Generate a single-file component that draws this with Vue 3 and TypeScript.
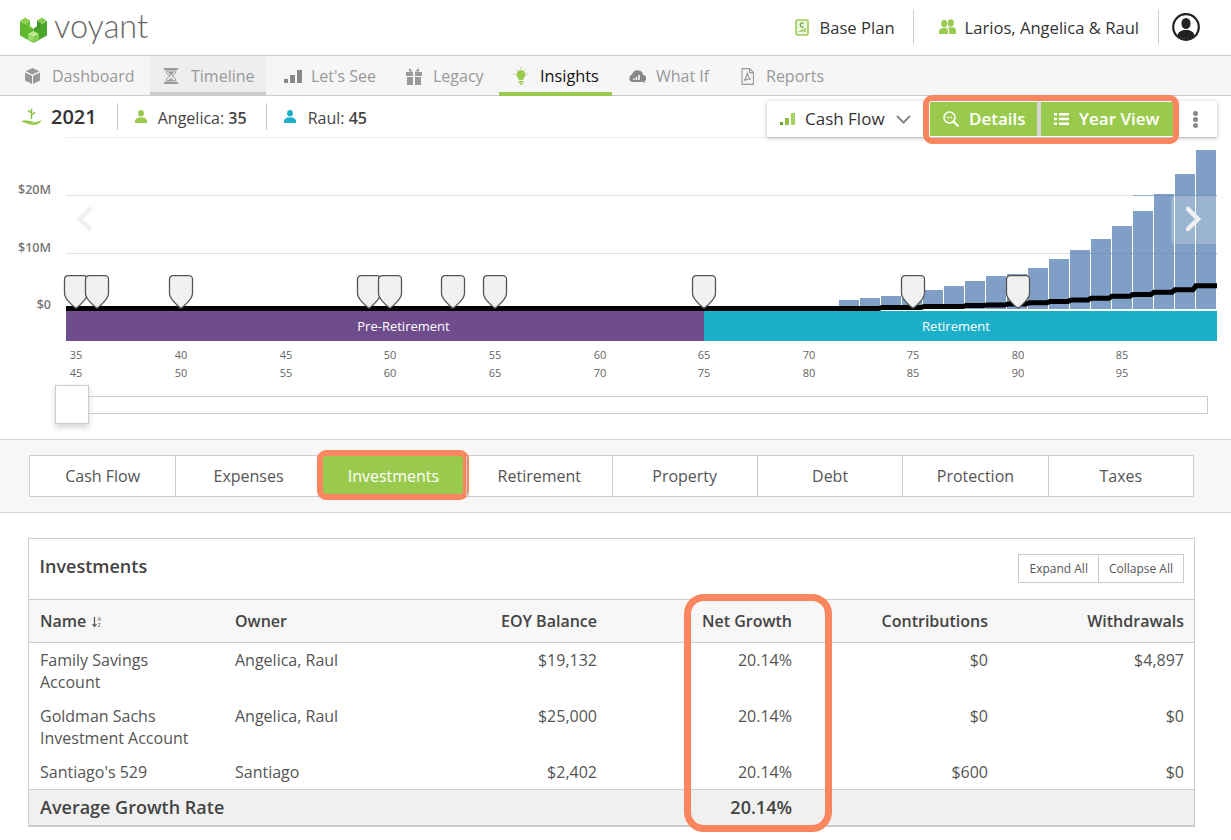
<script setup lang="ts">
const navItems = [
  { key: 'cube', label: 'Dashboard', w: 140, pad: 15 },
  { key: 'glass', label: 'Timeline', w: 116, pad: 14 },
  { key: 'bars', label: "Let's See", w: 125, pad: 18 },
  { key: 'gift', label: 'Legacy', w: 108, pad: 15 },
  { key: 'bulb', label: 'Insights', w: 113, pad: 14 },
  { key: 'cloud', label: 'What If', w: 114, pad: 17 },
  { key: 'pdf', label: 'Reports', w: 114, pad: 13 },
]

const barTops: [number, number][] = [
  [839, 300], [860, 298], [881, 296], [902, 293], [923, 290], [944, 286],
  [965, 281], [986, 276], [1007, 274], [1028, 268], [1049, 259], [1070, 250],
  [1091, 239], [1112, 226], [1133, 211], [1154, 194], [1175, 174], [1196, 150],
]

// black line: one flat run per year, with a short jump between them
const steps: [number, number][] = [
  [840, 308.5], [882, 307.5], [924, 306.5], [966, 305.5], [987, 305], [1008, 304],
  [1029, 302.8], [1050, 301.5], [1071, 300], [1091, 298.3], [1112, 296.2],
  [1133, 294.4], [1154, 292.2], [1175, 289.8], [1196, 285.8],
]
const linePoints = [
  '66,308.5',
  ...steps.map(([x, y], i) => {
    const end = i + 1 < steps.length ? steps[i + 1][0] - 3 : 1217
    return `${x},${y} ${end},${y}`
  }),
].join(' ')

const markers = [76, 97, 181, 369, 390, 453, 495, 704, 913, 1018]

const ages = [
  [76, 35, 45], [181, 40, 50], [286, 45, 55], [390, 50, 60], [495, 55, 65], [600, 60, 70],
  [704, 65, 75], [809, 70, 80], [913, 75, 85], [1018, 80, 90], [1122, 85, 95],
]

const sections = ['Cash Flow', 'Expenses', 'Investments', 'Retirement', 'Property', 'Debt', 'Protection', 'Taxes']

const rows = [
  { name: 'Family Savings Account', owner: 'Angelica, Raul', balance: '$19,132', growth: '20.14%', contrib: '$0', withdraw: '$4,897' },
  { name: 'Goldman Sachs Investment Account', owner: 'Angelica, Raul', balance: '$25,000', growth: '20.14%', contrib: '$0', withdraw: '$0' },
  { name: "Santiago's 529", owner: 'Santiago', balance: '$2,402', growth: '20.14%', contrib: '$600', withdraw: '$0' },
]
</script>

<template>
  <div class="page">
    <header class="topbar">
      <div class="logo">
        <svg width="27" height="27" viewBox="0 0 27 27">
          <polygon points="0,5 13.5,13 13.5,27 0,19.5" fill="#5fb82e" />
          <polygon points="27,5 13.5,13 13.5,27 27,19.5" fill="#4aa52b" />
          <polygon points="0,5 5,1.5 10,4.5 5,8" fill="#8fd14f" />
          <polygon points="17,4.5 22,1.5 27,5 22,8" fill="#86cc4a" />
          <polygon points="5,8 10,4.5 10,10 13.5,13 8,13" fill="#6cc137" />
          <polygon points="22,8 17,4.5 17,10 13.5,13 19,13" fill="#3f9a2a" />
          <polygon points="8,18 13.5,15 19,18 13.5,21" fill="#bce88f" />
          <polygon points="8,18 13.5,21 13.5,26.5 8,23.5" fill="#9bd968" />
          <polygon points="19,18 13.5,21 13.5,26.5 19,23.5" fill="#84cb52" />
        </svg>
        <span class="logo-text">voyant</span>
      </div>
      <div class="top-right">
        <div class="top-item plan">
          <svg width="14" height="17" viewBox="0 0 14 17">
            <rect x="1" y="1" width="12" height="15" rx="1.5" fill="#eef7e2" stroke="#9aca4d" stroke-width="1.5" />
            <path d="M8.5 4.500a2 2 0 1 0 0 3" fill="none" stroke="#6aa332" stroke-width="1.2" />
            <path d="M4 13v-1M6 13v-2M8 13v-3M10 13v-4" stroke="#8bbf45" stroke-width="1.2" />
          </svg>
          <span>Base Plan</span>
        </div>
        <div class="top-item client">
          <svg width="17" height="16" viewBox="0 0 17 16" fill="#9aca4d">
            <ellipse cx="5.2" cy="4.6" rx="3" ry="3.8" />
            <path d="M0 15v-2.500c0-2.500 2.500-3 3.500-3.500h3.400c1 .5 2 1 2 3.500v2.500z" />
            <ellipse cx="11.800" cy="4" rx="3.100" ry="3.800" />
            <path d="M8 8.500h7c1 .5 2 1 2 3.500v3h-6.800v-3c0-1.800-1-3-2.200-3.500z" />
          </svg>
          <span>Larios, Angelica &amp; Raul</span>
        </div>
        <svg class="avatar" width="28" height="28" viewBox="0 0 28 28">
          <circle cx="14" cy="14" r="12.800" fill="#fff" stroke="#222" stroke-width="2.200" />
          <ellipse cx="14" cy="10.500" rx="4.600" ry="5.600" fill="#222" />
          <path d="M5.500 22.500c.6-3.600 3.600-4.400 6-5.400h5c2.400 1 5.400 1.800 6 5.400a12 12 0 0 1-17 0z" fill="#222" />
        </svg>
      </div>
    </header>

    <nav class="nav">
      <div
        v-for="item in navItems"
        :key="item.key"
        class="nav-item"
        :class="{ visited: item.key === 'glass', current: item.key === 'bulb' }"
        :style="{ width: item.w + 'px', paddingLeft: item.pad + 'px' }"
      >
        <span class="nav-icon">
          <svg v-if="item.key === 'cube'" width="15" height="16" viewBox="0 0 15 16" fill="#999">
            <polygon points="7.500,0 14.500,3.300 7.500,6.500 .5,3.300" />
            <polygon points="0,4.500 7,7.700 7,16 0,12.500" />
            <polygon points="15,4.500 8,7.700 8,16 15,12.500" />
          </svg>
          <svg v-else-if="item.key === 'glass'" width="14" height="16" viewBox="0 0 14 16" fill="#999">
            <rect x="0" y="0" width="14" height="2" />
            <rect x="0" y="14" width="14" height="2" />
            <path d="M2 3h10c0 3-3 4-4 5 1 1 4 2 4 5H2c0-3 3-4 4-5-1-1-4-2-4-5z" fill="none" stroke="#999" />
            <path d="M4 4h6l-3 3.500zM3.500 13 7 10l3.500 3z" />
          </svg>
          <svg v-else-if="item.key === 'bars'" width="18" height="13" viewBox="0 0 18 13" fill="#888">
            <rect x="0" y="9" width="4" height="4" />
            <rect x="6" y="5" width="5" height="8" />
            <rect x="13" y="0" width="5" height="13" />
          </svg>
          <svg v-else-if="item.key === 'gift'" width="16" height="17" viewBox="0 0 16 17" fill="#999">
            <path d="M3 0l4 3.500h-4zM13 0L9 3.500h4z" />
            <rect x="0" y="4" width="7" height="4" />
            <rect x="9" y="4" width="7" height="4" />
            <rect x="1" y="9" width="6" height="8" />
            <rect x="9" y="9" width="6" height="8" />
          </svg>
          <svg v-else-if="item.key === 'bulb'" width="16" height="18" viewBox="0 0 16 18">
            <path d="M8 3a4.500 4.500 0 0 0-2.500 8.200V13h5v-1.800A4.500 4.500 0 0 0 8 3z" fill="#9aca4d" />
            <rect x="5.500" y="14" width="5" height="1.500" fill="#9aca4d" />
            <rect x="6.500" y="16" width="3" height="1.500" fill="#9aca4d" />
            <path d="M8 0v1.800M2.500 2l1.300 1.300M13.500 2l-1.300 1.300M.5 7h1.700M13.800 7h1.700" stroke="#b8b8a0" />
          </svg>
          <svg v-else-if="item.key === 'cloud'" width="17" height="15" viewBox="0 0 17 15">
            <path d="M4 13a3.800 3.800 0 0 1-1-7.400A5 5 0 0 1 9 1.500a5 5 0 0 1 5 4.200 3.600 3.600 0 0 1-1 7.300z" fill="#888" />
            <path d="M5 11V9.500M7.500 11V8M10 11V6" stroke="#fff" stroke-width="1.500" />
            <circle cx="15.500" cy="13.500" r=".7" fill="#888" />
          </svg>
          <svg v-else class="pdf-icon" width="13" height="17" viewBox="0 0 13 17" fill="none" stroke="#999" stroke-width="1.100">
            <path d="M1 .6h7.500L12.400 4.500v11.900H1z" />
            <path d="M8.500.6v4h3.900" />
            <path d="M6.200 5.500c-.6 2.500-1.300 5-3 7 2-1 4.500-1.500 6.500-1.300-1.500-1-2.800-3.300-3.500-5.700z" />
          </svg>
        </span>
        <span>{{ item.label }}</span>
      </div>
    </nav>

    <div class="subbar">
      <div class="sub-left">
        <div class="sub-year">
          <svg width="21" height="20" viewBox="0 0 21 20">
            <path d="M10.500 12V2" stroke="#8ebf48" stroke-width="1.500" fill="none" />
            <path d="M10.500 6C8.500 6 7 5 6.500 3c2 0 3.500 1 4 3zM10.500 8c2 0 3.500-1 4-3-2 0-3.500 1-4 3z" fill="#8ebf48" />
            <path d="M0 14.500c3-1.800 6-1.500 8-.5h4.500l-2.500 1.600 4.500-.6 6.500-1.500c-2.500 3-5.500 4.500-9 4.500-3 0-7.500-2.500-12-3.500z" fill="#9aca4d" />
          </svg>
          <span>2021</span>
        </div>
        <div class="sub-person first">
          <svg width="12" height="13" viewBox="0 0 12 13" fill="#9aca4d">
            <ellipse cx="6" cy="3.300" rx="2.900" ry="3.300" />
            <path d="M0 13v-2c0-2 2-3 3.500-3.500h5C10 8 12 9 12 11v2z" />
          </svg>
          <span>Angelica: <b>35</b></span>
        </div>
        <div class="sub-person second">
          <svg width="12" height="13" viewBox="0 0 12 13" fill="#1cafc9">
            <ellipse cx="6" cy="3.300" rx="2.900" ry="3.300" />
            <path d="M0 13v-2c0-2 2-3 3.500-3.500h5C10 8 12 9 12 11v2z" />
          </svg>
          <span>Raul: <b>45</b></span>
        </div>
      </div>

      <div class="controls">
        <div class="dropdown">
          <svg width="15" height="12" viewBox="0 0 15 12">
            <rect x="0" y="9" width="3" height="3" fill="#6aa332" />
            <rect x="5" y="5" width="4" height="7" fill="#8bbf45" />
            <rect x="11" y="0" width="4" height="12" fill="#a5d35f" />
          </svg>
          <span>Cash Flow</span>
          <svg class="chev" width="15" height="9" viewBox="0 0 15 9" fill="none" stroke="#888" stroke-width="2">
            <path d="M1 1l6.500 6.500L14 1" />
          </svg>
        </div>
        <div class="green-group">
          <button class="green-btn details">
            <svg width="16" height="16" viewBox="0 0 16 16" fill="none" stroke="#fff" stroke-width="1.500">
              <circle cx="6.500" cy="6.500" r="5.500" />
              <path d="M10.500 10.500 15.500 15.500" stroke-width="2" />
              <path d="M4 6.500h5" stroke-dasharray="1.200 .8" />
            </svg>
            <span>Details</span>
          </button>
          <button class="green-btn yearview">
            <svg width="15" height="12" viewBox="0 0 15 12" fill="#fff">
              <rect x="0" y="0" width="3" height="2.500" />
              <rect x="5" y="0" width="10" height="2.500" />
              <rect x="0" y="4.700" width="3" height="2.500" />
              <rect x="5" y="4.700" width="10" height="2.500" />
              <rect x="0" y="9.500" width="3" height="2.500" />
              <rect x="5" y="9.500" width="10" height="2.500" />
            </svg>
            <span>Year View</span>
          </button>
          <span class="ring ring-top"></span>
        </div>
        <div class="more">
          <i></i><i></i><i></i>
        </div>
      </div>
    </div>

    <svg class="chart" width="1231" height="248" viewBox="0 137 1231 248">
      <line x1="66" x2="1217" y1="137.500" y2="137.500" stroke="#eee" />
      <line x1="66" x2="1217" y1="195.500" y2="195.500" stroke="#e2e2e2" />
      <line x1="66" x2="1217" y1="253.500" y2="253.500" stroke="#e2e2e2" />
      <text class="axis" x="51" y="194" text-anchor="end">$20M</text>
      <text class="axis" x="51" y="252" text-anchor="end">$10M</text>
      <text class="axis" x="51" y="309" text-anchor="end">$0</text>

      <rect v-for="b in barTops" :key="b[0]" :x="b[0]" :y="b[1]" width="20" :height="309 - b[1]" fill="#7f9fc6" />
      <line x1="1133" x2="1217" y1="195.500" y2="195.500" stroke="#6f8fb6" opacity=".6" />
      <line x1="1070" x2="1217" y1="253.500" y2="253.500" stroke="#6f8fb6" opacity=".6" />

      <polyline :points="linePoints" fill="none" stroke="#000" stroke-width="5" />

      <g v-for="m in markers" :key="m" :transform="`translate(${m} 275)`">
        <path
          d="M-8 .7h16a3.500 3.500 0 0 1 3.500 3.500v14c0 5-7 12-11.500 15-4.500-3-11.500-10-11.500-15v-14a3.500 3.500 0 0 1 3.500-3.500z"
          fill="#f1f1f1"
          stroke="#555"
          stroke-width="1.300"
        />
      </g>

      <rect x="66" y="311" width="638" height="30" fill="#6f4c8b" />
      <rect x="704" y="311" width="513" height="30" fill="#1cafc9" />
      <text class="band" x="403.500" y="330.500" text-anchor="middle">Pre-Retirement</text>
      <text class="band" x="956" y="330.500" text-anchor="middle">Retirement</text>

      <g v-for="a in ages" :key="a[0]">
        <text class="age" :x="a[0]" y="359" text-anchor="middle">{{ a[1] }}</text>
        <text class="age" :x="a[0]" y="377" text-anchor="middle">{{ a[2] }}</text>
      </g>

      <path d="M90 209l-10 10 10 10" fill="none" stroke="#f0f0f0" stroke-width="4.500" stroke-linecap="round" />
      <path d="M1171 200a4 4 0 0 1 4-4h42v48h-42a4 4 0 0 1-4-4z" fill="#fff" fill-opacity=".22" />
      <path d="M1188 209l10 10-10 10" fill="none" stroke="#f0f0f0" stroke-width="4.500" stroke-linecap="round" />
    </svg>

    <div class="slider">
      <div class="slider-handle"></div>
      <div class="slider-track"></div>
    </div>

    <section class="tabs-band">
      <div class="tabs">
        <div v-for="s in sections" :key="s" class="tab" :class="{ active: s === 'Investments' }">
          {{ s }}
          <span v-if="s === 'Investments'" class="ring ring-tab"></span>
        </div>
      </div>
    </section>

    <section class="card">
      <div class="card-head">
        <h2>Investments</h2>
        <div class="btn-pair">
          <span>Expand All</span>
          <span>Collapse All</span>
        </div>
      </div>
      <div class="row row-head">
        <div class="name-head">
          Name
          <svg width="10" height="12" viewBox="0 0 10 12">
            <path d="M2.500 1v9M.5 8l2 2.500L4.500 8" fill="none" stroke="#555" stroke-width="1.200" />
            <text class="sort-letter" x="5.500" y="5">A</text>
            <text class="sort-letter" x="5.500" y="11">Z</text>
          </svg>
        </div>
        <div>Owner</div>
        <div class="num">EOY Balance</div>
        <div class="num">Net Growth</div>
        <div class="num">Contributions</div>
        <div class="num">Withdrawals</div>
      </div>
      <div v-for="r in rows" :key="r.name" class="row row-body">
        <div class="name-cell">{{ r.name }}</div>
        <div>{{ r.owner }}</div>
        <div class="num">{{ r.balance }}</div>
        <div class="num">{{ r.growth }}</div>
        <div class="num">{{ r.contrib }}</div>
        <div class="num">{{ r.withdraw }}</div>
      </div>
      <div class="row row-foot">
        <div class="foot-label">Average Growth Rate</div>
        <div></div>
        <div></div>
        <div class="num">20.14%</div>
        <div></div>
        <div></div>
      </div>
      <span class="ring ring-col"></span>
    </section>
  </div>
</template>

<style scoped>
.page {
  width: 1231px;
  height: 840px;
  overflow: hidden;
  font-family: "Open Sans", "Liberation Sans", sans-serif;
  font-size: 16px;
  color: #444;
  background: #fff;
}

.topbar {
  height: 55px;
  border-bottom: 1px solid #ccc;
  display: flex;
  justify-content: space-between;
  align-items: center;
}

.logo {
  display: flex;
  align-items: center;
  margin-left: 20px;
  gap: 7px;
  margin-top: 3px;
}

.logo-text {
  font-family: Lato, sans-serif;
  font-weight: 300;
  font-size: 32.500px;
  line-height: 34px;
  color: #666;
  position: relative;
  top: -3px;
}

.top-right {
  display: flex;
  align-items: center;
  height: 34px;
  margin-top: -1px;
  font-size: 16.600px;
}

.top-item {
  display: flex;
  align-items: center;
  height: 34px;
  color: #333;
}

.plan {
  gap: 11px;
  padding-right: 18px;
  border-right: 1px solid #ccc;
}

.client {
  gap: 9px;
  padding: 0 19px 0 25px;
  border-right: 1px solid #ccc;
}

.avatar {
  margin: 0 31px 0 13px;
}

.nav {
  height: 39px;
  padding-left: 10px;
  background: #f6f6f6;
  border-bottom: 1px solid #ccc;
  display: flex;
  color: #999;
}

.nav-item {
  box-sizing: border-box;
  display: flex;
  align-items: center;
  height: 40px;
  border-bottom: 4px solid transparent;
  padding-top: 4px;
}

.nav-item.visited {
  background: #eee;
  border-bottom-color: #ccc;
}

.nav-item.current {
  color: #111;
  font-size: 16.300px;
  font-weight: 500;
  border-bottom-color: #9aca4d;
}

.nav-icon {
  display: flex;
  align-items: center;
  width: 27px;
}

.pdf-icon {
  margin-left: 2px;
}

.subbar {
  position: relative;
  z-index: 2;
  height: 41px;
  display: flex;
  justify-content: space-between;
  align-items: flex-start;
}

.sub-left {
  display: flex;
  align-items: center;
  height: 27px;
  margin-top: 7px;
}

.sub-year {
  display: flex;
  align-items: center;
  gap: 9px;
  padding: 0 20px 0 21px;
  height: 27px;
  font-size: 20px;
  font-weight: 600;
  color: #333;
  border-right: 1px solid #ccc;
}

.sub-person {
  display: flex;
  align-items: center;
  gap: 11px;
  height: 27px;
  padding: 0 0 0 17px;
}

.sub-person span {
  padding-top: 2px;
}

.sub-person.first {
  padding-right: 19px;
  border-right: 1px solid #ccc;
}

.sub-person.second {
  gap: 12px;
}

.sub-person b {
  font-weight: 600;
}

.controls {
  display: flex;
  align-items: center;
  height: 36px;
  margin: 5px 14px 0 0;
  background: #fff;
  box-shadow: 0 1px 4px rgba(0, 0, 0, 0.3);
}

.dropdown {
  display: flex;
  align-items: center;
  width: 163px;
  box-sizing: border-box;
  padding-left: 13px;
  font-size: 17px;
  font-weight: 500;
  color: #333;
}

.dropdown span {
  margin-left: 10px;
  padding-bottom: 2px;
}

.chev {
  margin-left: 11px;
}

.green-group {
  position: relative;
  display: flex;
  gap: 4px;
  height: 34px;
  background: #d6d6d6;
}

.green-btn {
  display: flex;
  align-items: center;
  height: 34px;
  border: 0;
  margin: 0;
  background: #9aca4d;
  color: #fff;
  font: 600 17px "Open Sans", sans-serif;
}

.green-btn span {
  padding-bottom: 2px;
}

.details {
  width: 107px;
  padding: 0 0 0 13px;
  gap: 10px;
}

.yearview {
  width: 132px;
  padding: 0 0 0 13px;
  gap: 10px;
}

.more {
  flex: 1;
  width: 44px;
  display: flex;
  flex-direction: column;
  align-items: center;
  gap: 1px;
}

.more i {
  width: 5px;
  height: 5px;
  border-radius: 50%;
  background: #8a8a8a;
}

.ring {
  position: absolute;
  box-sizing: border-box;
  border: 6px solid #f9865f;
  pointer-events: none;
}

.ring-top {
  left: -7px;
  top: -7px;
  width: 256px;
  height: 49px;
  border-radius: 9px;
}

.chart {
  display: block;
}

.axis {
  font-size: 12.500px;
  font-weight: 600;
  fill: #777;
}

.band {
  font-size: 13px;
  fill: #fff;
}

.age {
  font-size: 11px;
  fill: #666;
}

.slider {
  height: 54px;
  display: flex;
  align-items: flex-start;
  padding-left: 55px;
}

.slider-handle {
  box-sizing: border-box;
  width: 34px;
  height: 39px;
  background: #fff;
  border: 1px solid #ccc;
  box-shadow: 0 3px 6px rgba(0, 0, 0, 0.18);
}

.slider-track {
  box-sizing: border-box;
  flex: 0 0 1119px;
  height: 18px;
  margin-top: 11px;
  border: 1px solid #ccc;
  border-left: 0;
}

.tabs-band {
  box-sizing: border-box;
  height: 74px;
  padding: 15px 37px 15px 29px;
  background: #f7f7f7;
  border-top: 1px solid #d4d4d4;
  border-bottom: 1px solid #d4d4d4;
}

.tabs {
  display: grid;
  grid-template-columns: repeat(8, 1fr);
  height: 42px;
  background: #fff;
  border: 1px solid #ccc;
  box-sizing: border-box;
}

.tab {
  position: relative;
  display: flex;
  align-items: center;
  justify-content: center;
  color: #555;
  border-left: 1px solid #ccc;
}

.tab:first-child {
  border-left: 0;
}

.tab.active {
  background: #9aca4d;
  color: #fff;
  border-left: 0;
}

.ring-tab {
  inset: -6px -3px -4px -4px;
  border-radius: 9px;
}

.card {
  position: relative;
  box-sizing: border-box;
  width: 1167px;
  height: 289px;
  margin: 25px 0 0 28px;
  border: 1px solid #ccc;
  border-bottom: 2px solid #ccc;
}

.card-head {
  height: 60px;
  box-sizing: border-box;
  display: flex;
  justify-content: space-between;
  align-items: flex-start;
  padding: 15px 10px 0 10.500px;
}

.card-head h2 {
  margin: 0;
  font-size: 18px;
  line-height: 25px;
  font-weight: 600;
  color: #444;
}

.btn-pair {
  display: flex;
  height: 29px;
  border: 1px solid #ccc;
  box-sizing: border-box;
  font-size: 12px;
  color: #555;
}

.btn-pair span {
  display: flex;
  align-items: center;
  padding: 0 10px;
}

.btn-pair span + span {
  border-left: 1px solid #ccc;
}

.row {
  display: grid;
  grid-template-columns: 195px 188px 196px 195px 196px 196px;
  box-sizing: border-box;
}

.row > div {
  padding: 0 11px;
}

.num {
  text-align: right;
}

.row-head {
  height: 44px;
  align-items: center;
  background: #f7f7f7;
  border-top: 1px solid #ccc;
  border-bottom: 1px solid #ccc;
  font-weight: 600;
}

.name-head svg {
  margin-left: 2px;
  vertical-align: -1px;
}

.sort-letter {
  font-size: 5.500px;
  fill: #777;
}

.row-body {
  padding: 6px 0;
  line-height: 22px;
  color: #555;
}

.row-body .name-cell {
  padding-right: 14px;
}

.row-foot {
  height: 36px;
  padding-bottom: 2px;
  align-items: center;
  background: #f0f0f0;
  border-top: 1px solid #ccc;
  font-size: 18px;
  font-weight: 600;
  color: #444;
}

.row-foot .foot-label {
  white-space: nowrap;
}

.ring-col {
  left: 655px;
  top: 55px;
  width: 148px;
  height: 238px;
  border-width: 7px;
  border-radius: 20px;
}
</style>

<style>
html,
body {
  margin: 0;
  background: #fff;
}
</style>
